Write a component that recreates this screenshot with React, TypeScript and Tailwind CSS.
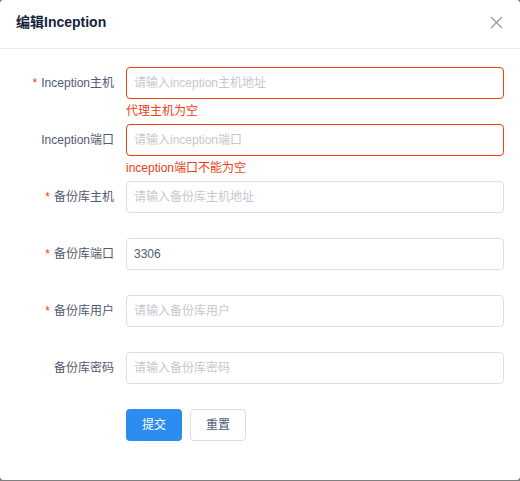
const font = { fontFamily: '"Liberation Sans", "Noto Sans CJK SC", sans-serif' };

type Field = {
  label: string;
  required?: boolean;
  placeholder: string;
  value?: string;
  error?: string;
};

const fields: Field[] = [
  { label: "Inception主机", required: true, placeholder: "请输入inception主机地址", error: "代理主机为空" },
  { label: "Inception端口", placeholder: "请输入inception端口", error: "inception端口不能为空" },
  { label: "备份库主机", required: true, placeholder: "请输入备份库主机地址" },
  { label: "备份库端口", required: true, placeholder: "", value: "3306" },
  { label: "备份库用户", required: true, placeholder: "请输入备份库用户" },
  { label: "备份库密码", placeholder: "请输入备份库密码" },
];

function FormRow({ f }: { f: Field }) {
  return (
    <div className="flex mb-[25px]">
      <label className="w-[110px] shrink-0 pr-3 h-8 flex items-center justify-end text-xs text-[#515a6e]">
        {f.required && <span className="text-[#ed4014] mr-1 text-xs">*</span>}
        {f.label}
      </label>
      <div className="relative flex-1">
        <input
          readOnly
          defaultValue={f.value}
          placeholder={f.placeholder}
          className={`w-full h-8 rounded-[4px] border px-[7px] text-xs text-[#515a6e] placeholder:text-[#c5c8ce] outline-none ${
            f.error ? "border-[#ed4014]" : "border-[#dcdee2]"
          }`}
          style={font}
        />
        {f.error && (
          <div className="absolute left-0 top-full pt-[6px] text-xs leading-none text-[#ed4014]">{f.error}</div>
        )}
      </div>
    </div>
  );
}

export default function App() {
  return (
    <div className="w-[520px] h-[481px] bg-[#808080]" style={font}>
      <div className="w-[520px] h-[480px] bg-white rounded-[4px] flex flex-col">
        <div className="h-[49px] border-b border-[#e8eaec] flex items-center justify-between pl-4 pr-[17px] pb-[4px]">
          <span className="text-sm font-bold text-[#17233d]">编辑Inception</span>
          <svg width="13" height="13" viewBox="0 0 13 13">
            <path d="M1 1 L12 12 M12 1 L1 12" stroke="#999" strokeWidth="1.2" />
          </svg>
        </div>
        <div className="pt-[18px] pl-4 pr-4">
          {fields.map((f) => (
            <FormRow key={f.label} f={f} />
          ))}
          <div className="flex gap-2 pl-[110px]">
            <button className="w-14 h-8 rounded-[4px] bg-[#2d8cf0] text-white text-xs">提交</button>
            <button className="w-14 h-8 rounded-[4px] border border-[#dcdee2] bg-white text-[#515a6e] text-xs">重置</button>
          </div>
        </div>
      </div>
    </div>
  );
}
